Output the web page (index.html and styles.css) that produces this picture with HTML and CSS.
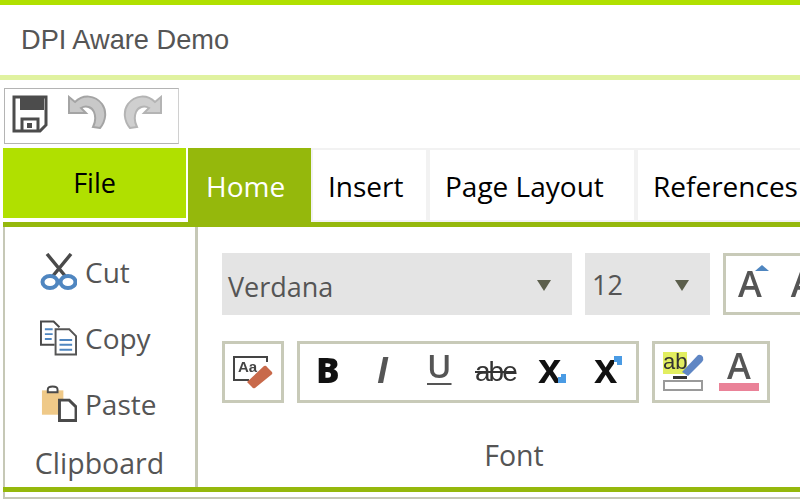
FILE: index.html
```html
<!DOCTYPE html>
<html lang="en">
<head>
    <meta charset="UTF-8">
    <title>DPI Aware Demo</title>
    <link rel="stylesheet" href="styles.css">
</head>
<body>
    <div class="window">
        <div class="title">DPI Aware Demo</div>

        <div class="quick-wrap">
            <div class="quick">
                <svg class="quick-icon save-icon" width="36" height="38" viewBox="0 0 36 38">
                    <path d="M2 2H34V30L28 36H2Z" fill="#fff" stroke="#4c4c4c" stroke-width="3"/>
                    <rect x="8" y="2" width="24" height="13" fill="#4c4c4c"/>
                    <path d="M10 36V24H26V36" fill="none" stroke="#4c4c4c" stroke-width="3"/>
                    <rect x="15" y="28" width="5" height="5" fill="#4c4c4c"/>
                </svg>
                <svg class="quick-icon" width="40" height="34" viewBox="0 0 40 34">
                    <path d="M1 2V18H18L13 13C18 10 24 12 26 17C28 22 27 28 25 32L32 33C38 26 39 16 34 9C27 0 15 -1 7 7Z" fill="#c8c8c8" stroke="#a4a4a4" stroke-width="2"/>
                </svg>
                <svg class="quick-icon" width="40" height="34" viewBox="0 0 40 34">
                    <path d="M39 2V18H22L27 13C22 10 16 12 14 17C12 22 13 28 15 32L8 33C2 26 1 16 6 9C13 0 25 -1 33 7Z" fill="#cfcfcf" stroke="#b4b4b4" stroke-width="2"/>
                </svg>
            </div>
        </div>

        <div class="tabs">
            <div class="file-tab">File</div>
            <div class="tab active">Home</div>
            <div class="tab tab-insert">Insert</div>
            <div class="tab tab-layout">Page Layout</div>
            <div class="tab">References</div>
        </div>

        <div class="ribbon">
            <div class="group clipboard">
                <div class="clip-row">
                    <svg class="soft" width="37" height="38" viewBox="0 0 37 38">
                        <path d="M7 1L26 24M31 1L12 24" fill="none" stroke="#4a4a4a" stroke-width="3.5"/>
                        <ellipse cx="10" cy="29" rx="7.5" ry="6" fill="none" stroke="#4f86c0" stroke-width="4"/>
                        <ellipse cx="28" cy="29" rx="7.5" ry="6" fill="none" stroke="#4f86c0" stroke-width="4"/>
                    </svg>
                    <span>Cut</span>
                </div>
                <div class="clip-row">
                    <svg class="soft" width="37" height="36" viewBox="0 0 38 36">
                        <path d="M15 25H1V1H14L20 7" fill="#fff" stroke="#4a4a4a" stroke-width="2"/>
                        <path d="M5 9H13M5 14H13M5 19H12" stroke="#4f86c0" stroke-width="2"/>
                        <path d="M16 9H30L37 16V35H16Z" fill="#fff" stroke="#555" stroke-width="2"/>
                        <path d="M20 20H33M20 25H33M20 30H33" stroke="#4f86c0" stroke-width="2"/>
                    </svg>
                    <span>Copy</span>
                </div>
                <div class="clip-row">
                    <svg class="soft" width="37" height="38" viewBox="0 0 38 38">
                        <path d="M2 5H24V30H2Z" fill="#efc988"/>
                        <path d="M8 7V4Q8 1 13 1Q18 1 18 4V7Z" fill="#fff" stroke="#4a4a4a" stroke-width="2"/>
                        <path d="M20 15H30L37 22V36H20Z" fill="#fff" stroke="#4a4a4a" stroke-width="3"/>
                    </svg>
                    <span>Paste</span>
                </div>
                <div class="group-label">Clipboard</div>
            </div>

            <div class="group font-group">
                <div class="font-row">
                    <div class="combo name-combo">Verdana<i class="caret"></i></div>
                    <div class="combo size-combo">12<i class="caret"></i></div>
                    <div class="box grow-box">
                        <span class="big-a">A</span><i class="up-mark"></i>
                        <span class="big-a">A</span>
                    </div>
                </div>
                <div class="font-row">
                    <div class="box tool-box">
                        <svg class="soft" width="40" height="36" viewBox="0 0 40 36">
                            <path d="M34 8V3H1V26H16" fill="none" stroke="#444" stroke-width="2"/>
                            <text x="5" y="18" class="eraser-text">Aa</text>
                            <path d="M14 28L31 12Q33 11 34 13L39 18Q40 20 38 21L22 34Q20 35 19 33Z" fill="#c8694a"/>
                        </svg>
                    </div>
                    <div class="box format-box">
                        <span class="fmt fmt-b">B</span>
                        <span class="fmt fmt-i">I</span>
                        <span class="fmt fmt-u">U</span>
                        <span class="fmt fmt-s">abe</span>
                        <span class="fmt fmt-x">x<i class="blue-mark sub"></i></span>
                        <span class="fmt fmt-x">x<i class="blue-mark sup"></i></span>
                    </div>
                    <div class="box color-box">
                        <svg class="soft" width="42" height="40" viewBox="0 0 42 40">
                            <rect x="1" y="0" width="24" height="22" fill="#e2ee60"/>
                            <text x="1" y="17" class="marker-text">ab</text>
                            <path d="M20 20L36 3Q39 2 41 5Q42 8 40 10L26 24Z" fill="#5f86c4"/>
                            <rect x="11" y="24" width="14" height="3" fill="#333"/>
                            <rect x="2" y="29" width="38" height="9" fill="#fff" stroke="#9a9a9a" stroke-width="2"/>
                        </svg>
                        <div class="color-a">
                            <span class="big-a">A</span>
                            <i class="color-bar"></i>
                        </div>
                    </div>
                </div>
                <div class="group-label">Font</div>
            </div>
        </div>
        <div class="base-line"></div>
    </div>
</body>
</html>
```

FILE: styles.css
```css
html, body {
    margin: 0;
    padding: 0;
    background: white;
}
.window {
    width: 800px;
    height: 502px;
    overflow: hidden;
    border-top: 5px solid #b0e000;
    box-sizing: border-box;
    font-family: "Open Sans", sans-serif;
    color: #555;
}
.soft {
    flex: none;
    filter: blur(0.4px);
}
.title {
    height: 70px;
    line-height: 70px;
    padding-left: 21px;
    font-family: "Liberation Sans", Arial, sans-serif;
    font-size: 27.2px;
    border-bottom: 5px solid #e0f2a0;
}
.quick-wrap {
    padding: 8px 0 4px 4px;
}
.quick {
    width: 175px;
    height: 56px;
    box-sizing: border-box;
    border: 1px solid #b4b4b4;
    border-right-color: #d0d0d0;
    display: flex;
    align-items: flex-start;
    gap: 14px;
    padding: 5px 0 0 7px;
}
.quick-icon {
    margin-top: 1px;
    filter: blur(0.6px);
}
.save-icon {
    margin-right: 6px;
}
.tabs {
    display: flex;
    width: 1000px;
    height: 74px;
    margin-left: 3px;
    color: black;
    font-size: 28px;
}
.file-tab {
    width: 183px;
    height: 70px;
    line-height: 70px;
    margin-right: 2px;
    text-align: center;
    font-size: 27px;
    background: #b0e000;
}
.tab {
    height: 74px;
    line-height: 72px;
    box-sizing: border-box;
    padding: 0 15px;
    border: 2px solid #f2f2f2;
    white-space: nowrap;
}
.tab.active {
    width: 123px;
    padding-left: 16px;
    background: #95b80c;
    border-color: #95b80c;
    color: white;
}
.tab-insert {
    width: 117px;
}
.tab-layout {
    width: 208px;
}
.ribbon {
    display: flex;
    width: 1000px;
    height: 270px;
    margin-left: 3px;
    box-sizing: border-box;
    border-top: 5px solid #95b80c;
    border-bottom: 5px solid #95b80c;
}
.group {
    position: relative;
    box-sizing: border-box;
    height: 260px;
}
.clipboard {
    width: 195px;
    border-left: 2px solid #c6c8b6;
    border-right: 3px solid #c6c8b6;
    padding: 26px 0 0 35px;
}
.clip-row {
    display: flex;
    align-items: center;
    gap: 8px;
    height: 38px;
    margin-bottom: 28px;
    font-size: 28px;
}
.group-label {
    position: absolute;
    left: 0;
    right: 1px;
    bottom: 5px;
    text-align: center;
    font-size: 28.5px;
    line-height: 38px;
}
.font-group {
    width: 635px;
    padding: 26px 0 0 24px;
}
.font-group .group-label {
    right: 3px;
    bottom: 13px;
}
.font-row {
    display: flex;
    gap: 13px;
    height: 62px;
    margin-bottom: 26px;
    font-size: 27px;
}
.combo {
    position: relative;
    flex: none;
    height: 62px;
    line-height: 68px;
    box-sizing: border-box;
    padding-left: 6px;
    background: #e4e4e4;
}
.name-combo {
    width: 350px;
}
.size-combo {
    width: 125px;
    line-height: 64px;
    padding-left: 7px;
}
.caret {
    position: absolute;
    top: 27px;
    right: 21px;
    border-left: 7px solid transparent;
    border-right: 7px solid transparent;
    border-top: 11px solid #5c5f4c;
}
.box {
    display: flex;
    flex: none;
    align-items: center;
    box-sizing: border-box;
    height: 62px;
    border: 3px solid #c8cab8;
}
.grow-box {
    position: relative;
    width: 140px;
    gap: 29px;
    padding-left: 12px;
}
.big-a {
    font-weight: 600;
    font-size: 36px;
    line-height: 36px;
    color: #555;
    filter: blur(0.4px);
}
.up-mark {
    position: absolute;
    top: 9px;
    left: 29px;
    border-left: 7px solid transparent;
    border-right: 7px solid transparent;
    border-bottom: 6px solid #4f86c0;
}
.tool-box {
    width: 62px;
    padding-left: 8px;
}
.eraser-text {
    font-family: "Liberation Sans", sans-serif;
    font-size: 15px;
    font-weight: bold;
    fill: #444;
}
.format-box {
    width: 342px;
    align-items: flex-start;
    padding-left: 16px;
}
.fmt {
    position: relative;
    flex: none;
    font-size: 35px;
    line-height: 51px;
    color: #111;
    filter: blur(0.4px);
}
.fmt-b {
    width: 61px;
    font-weight: 800;
}
.fmt-i {
    width: 50px;
    font-style: italic;
    font-weight: 700;
    color: #555;
}
.fmt-u {
    width: 48px;
    font-weight: 600;
    font-size: 33px;
    line-height: 44px;
    color: #555;
    text-decoration: underline;
    text-decoration-thickness: 2px;
    text-underline-offset: 5px;
}
.fmt-s {
    width: 63px;
    font-family: "Liberation Sans", sans-serif;
    font-size: 28px;
    line-height: 56px;
    letter-spacing: -2px;
    color: #333;
    text-decoration: line-through;
}
.fmt-x {
    width: 56px;
    font-family: "Liberation Sans", sans-serif;
    font-size: 42px;
    line-height: 49px;
    font-weight: bold;
}
.blue-mark {
    position: absolute;
    width: 8px;
    height: 9px;
    background: #4a9be4;
    left: 20px;
}
.blue-mark::before {
    content: "";
    position: absolute;
    left: 0;
    width: 3px;
    height: 3px;
    background: white;
}
.blue-mark.sub {
    top: 30px;
}
.blue-mark.sub::before {
    top: 0;
}
.blue-mark.sup {
    top: 12px;
}
.blue-mark.sup::before {
    bottom: 0;
}
.marker-text {
    font-family: "Liberation Sans", sans-serif;
    font-size: 22px;
    fill: #333;
}
.color-box {
    width: 118px;
    gap: 15px;
    padding-left: 7px;
}
.color-a {
    display: flex;
    flex-direction: column;
    align-items: center;
    width: 40px;
    margin-top: -5px;
}
.color-bar {
    width: 40px;
    height: 8px;
    margin-top: -1px;
    background: #ea8298;
}
.base-line {
    height: 7px;
    margin-left: 3px;
    box-sizing: border-box;
    border-left: 2px solid #c6c8b6;
    border-bottom: 2px solid #c6c8b6;
}
```
